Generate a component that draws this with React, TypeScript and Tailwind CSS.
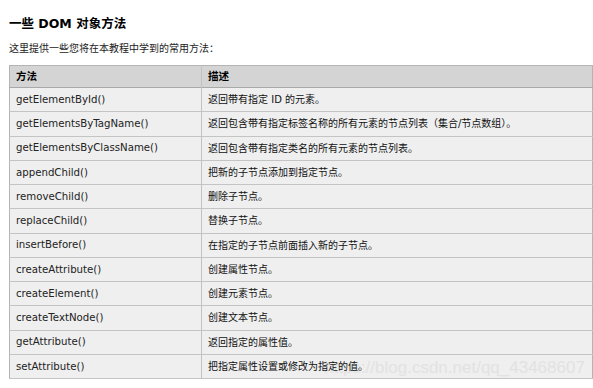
const methods: [string, string][] = [
  ['getElementById()', '返回带有指定 ID 的元素。'],
  ['getElementsByTagName()', '返回包含带有指定标签名称的所有元素的节点列表（集合/节点数组）。'],
  ['getElementsByClassName()', '返回包含带有指定类名的所有元素的节点列表。'],
  ['appendChild()', '把新的子节点添加到指定节点。'],
  ['removeChild()', '删除子节点。'],
  ['replaceChild()', '替换子节点。'],
  ['insertBefore()', '在指定的子节点前面插入新的子节点。'],
  ['createAttribute()', '创建属性节点。'],
  ['createElement()', '创建元素节点。'],
  ['createTextNode()', '创建文本节点。'],
  ['getAttribute()', '返回指定的属性值。'],
  ['setAttribute()', '把指定属性设置或修改为指定的值。'],
];

const cjk = "font-['DejaVu_Sans','Noto_Sans_CJK_SC',sans-serif]";

export default function App() {
  return (
    <div className="relative w-[593px] h-[388px] overflow-hidden bg-white text-black">
      <h2 className={`pl-[9px] pt-[16px] text-[12.5px] font-bold leading-[16px] ${cjk}`}>一些 DOM 对象方法</h2>
      <p className={`pl-[9px] pt-[10px] text-[10px] leading-[14px] text-[#222] ${cjk}`}>
        这里提供一些您将在本教程中学到的常用方法：
      </p>
      <table className={`ml-[9px] mt-[9px] w-[584px] border-collapse border border-[#b4b4b4] ${cjk}`}>
        <thead>
          <tr className="h-[22px] bg-[#d4d4d4] border-b border-[#a9a9a9]">
            <th className="w-[192px] border-r border-[#c2c2c2] pl-[6px] text-left text-[10.5px] font-bold">方法</th>
            <th className="pl-[6px] text-left text-[10.5px] font-bold">描述</th>
          </tr>
        </thead>
        <tbody>
          {methods.map(([name, desc]) => (
            <tr key={name} className="h-[24.25px] bg-[#efefef] border-b border-[#c4c4c4]">
              <td className="border-r border-[#c2c2c2] pl-[6px] text-[10.2px] text-[#222] font-['DejaVu_Sans',sans-serif]">
                <span className="relative z-10">{name}</span>
              </td>
              <td className="pl-[6px] text-[10px] text-[#111]">
                <span className="relative z-10">{desc}</span>
              </td>
            </tr>
          ))}
        </tbody>
      </table>
      {/* csdn watermark, sits under the cell text */}
      <div className="absolute z-0 left-[324px] top-[358px] text-[17px] leading-[20px] text-[#e2e2e2] font-['Liberation_Sans',sans-serif] pointer-events-none">
        https://blog.csdn.net/qq_43468607
      </div>
    </div>
  );
}
